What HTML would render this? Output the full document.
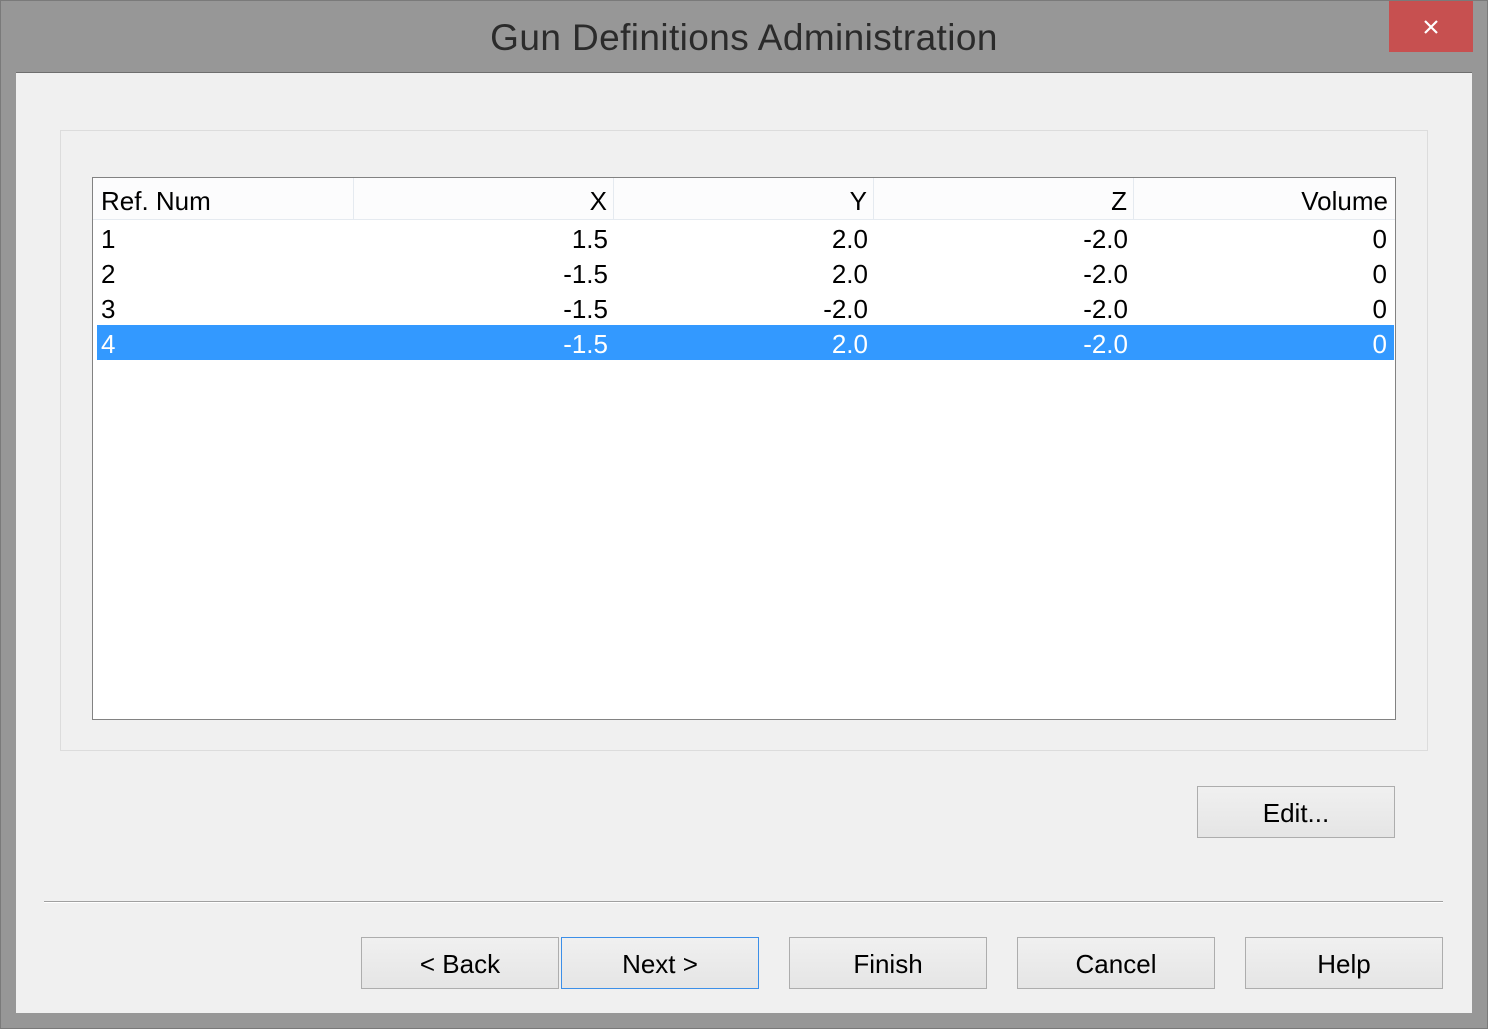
<!DOCTYPE html>
<html><head><style>
*{margin:0;padding:0;box-sizing:border-box}
body{width:1488px;height:1029px;background:#979797;position:relative;overflow:hidden;font-family:"Liberation Sans",Arial,sans-serif;color:#000}
.abs{position:absolute}
#frame{left:0;top:0;width:1488px;height:1029px;border:1px solid #7a7a7a}
#title{left:0;top:15px;width:1488px;text-align:center;font-size:37px;letter-spacing:0.4px;color:#2b2b2b;line-height:46px}
#close{left:1389px;top:1px;width:84px;height:51px;background:#c75050}
#content{left:16px;top:72px;width:1456px;height:941px;background:#f0f0f0;border-top:1px solid #6e6e6e}
#group{left:60px;top:130px;width:1368px;height:621px;border:1px solid #dcdcdc}
#list{left:92px;top:177px;width:1304px;height:543px;border:1px solid #828282;background:#fff}
.hdr{top:0;height:42px;background:#fcfcfd;border-bottom:1px solid #e5eaf0;border-right:1px solid #e5eaf0;font-size:26px;line-height:46px;padding:0 6px}
.cell{font-size:26px;line-height:37px;height:35px;padding:0 6px 0 8px}
.r{text-align:right}
#sel{left:4px;top:147px;width:1297px;height:35px;background:#3399ff}
.btn{height:52px;width:198px;border:1px solid #adadad;background:linear-gradient(#f0f0f0,#e5e5e5);font-size:26px;text-align:center;line-height:52px}
#sep{left:44px;top:901px;width:1399px;height:2px;border-top:1px solid #a0a0a0;border-bottom:1px solid #fff}
</style></head><body>
<div id="frame" class="abs"></div>
<div id="title" class="abs">Gun Definitions Administration</div>
<div id="close" class="abs"><svg width="84" height="51"><path d="M36 20 L48 32 M48 20 L36 32" stroke="#fff" stroke-width="2.2"/></svg></div>
<div id="content" class="abs"></div>
<div id="group" class="abs"></div>
<div id="list" class="abs">
 <div class="abs hdr" style="left:0;width:261px;padding-left:8px">Ref. Num</div>
 <div class="abs hdr r" style="left:261px;width:260px">X</div>
 <div class="abs hdr r" style="left:521px;width:260px">Y</div>
 <div class="abs hdr r" style="left:781px;width:260px">Z</div>
 <div class="abs hdr r" style="left:1041px;width:261px;border-right:none;padding-right:7px">Volume</div>
 <div id="sel" class="abs"></div>
 <div class="abs" style="left:0;top:43px;width:1302px">
  <div style="display:flex" class="cell"><div style="width:247px">1</div><div class="r" style="width:260px">1.5</div><div class="r" style="width:260px">2.0</div><div class="r" style="width:260px">-2.0</div><div class="r" style="width:259px">0</div></div>
  <div style="display:flex" class="cell"><div style="width:247px">2</div><div class="r" style="width:260px">-1.5</div><div class="r" style="width:260px">2.0</div><div class="r" style="width:260px">-2.0</div><div class="r" style="width:259px">0</div></div>
  <div style="display:flex" class="cell"><div style="width:247px">3</div><div class="r" style="width:260px">-1.5</div><div class="r" style="width:260px">-2.0</div><div class="r" style="width:260px">-2.0</div><div class="r" style="width:259px">0</div></div>
  <div style="display:flex;color:#fff" class="cell"><div style="width:247px">4</div><div class="r" style="width:260px">-1.5</div><div class="r" style="width:260px">2.0</div><div class="r" style="width:260px">-2.0</div><div class="r" style="width:259px">0</div></div>
 </div>
</div>
<div class="abs btn" style="left:1197px;top:786px">Edit...</div>
<div id="sep" class="abs"></div>
<div class="abs btn" style="left:361px;top:937px">&lt; Back</div>
<div class="abs btn" style="left:561px;top:937px;border-color:#3c8fe8">Next &gt;</div>
<div class="abs btn" style="left:789px;top:937px">Finish</div>
<div class="abs btn" style="left:1017px;top:937px">Cancel</div>
<div class="abs btn" style="left:1245px;top:937px">Help</div>
</body></html>
